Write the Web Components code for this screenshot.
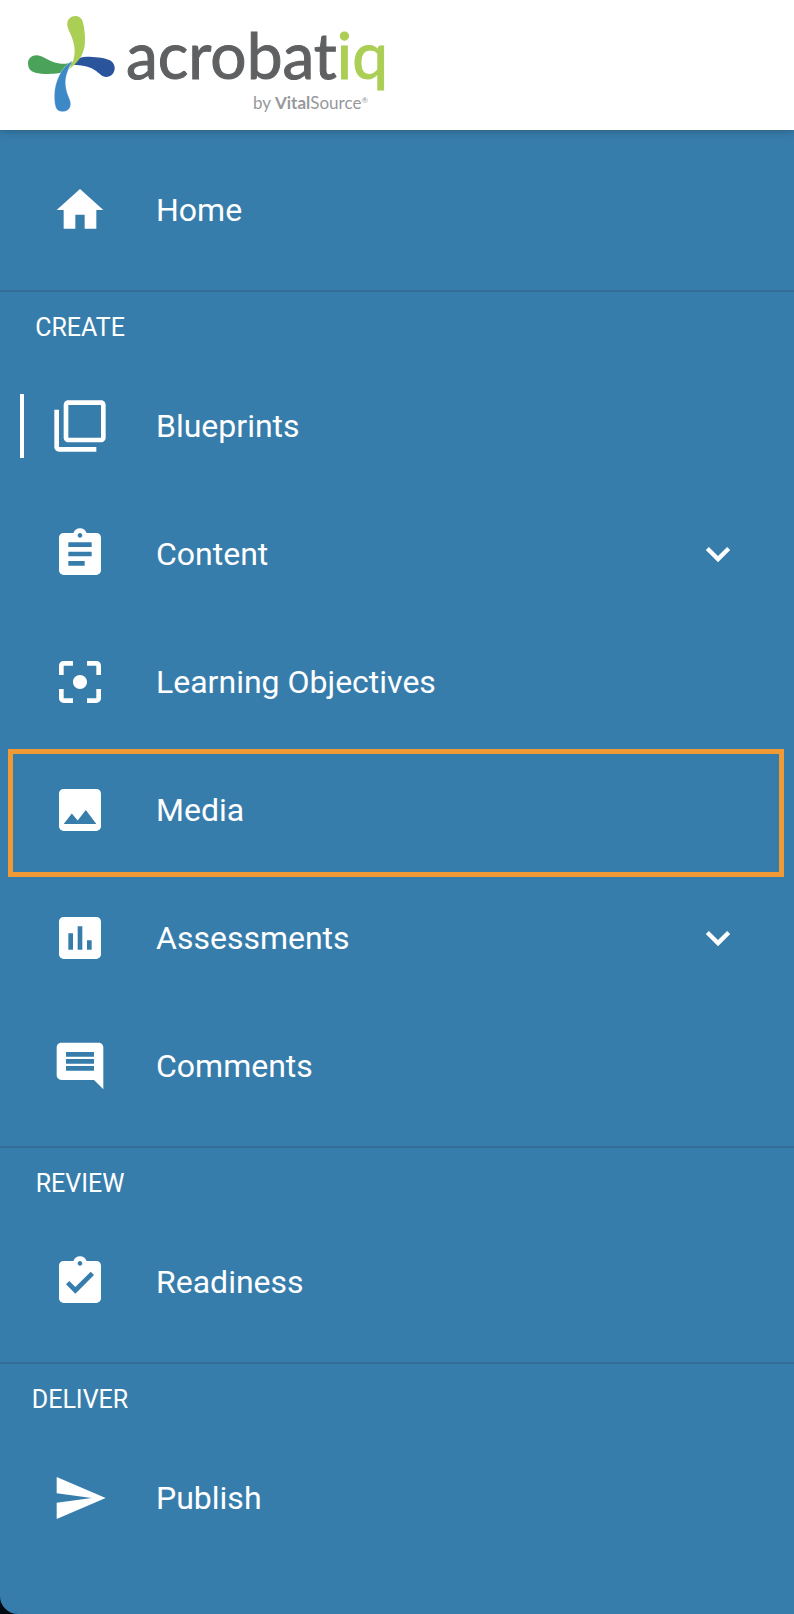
<!DOCTYPE html>
<html lang="en">
<head>
<meta charset="utf-8">
<meta name="viewport" content="width=device-width, initial-scale=1">
<title>Acrobatiq</title>
<style>
  html { background: #020a12; }
  body { margin: 0; font-family: Roboto, "Liberation Sans", sans-serif; }
</style>
</head>
<body>
<app-sidebar>
  <brand-logo slot="brand"></brand-logo>
  <nav-section>
    <nav-item icon="home">Home</nav-item>
  </nav-section>
  <nav-section heading="CREATE">
    <nav-item icon="blueprints" current>Blueprints</nav-item>
    <nav-item icon="content" expandable>Content</nav-item>
    <nav-item icon="objectives">Learning Objectives</nav-item>
    <nav-item icon="media" highlighted>Media</nav-item>
    <nav-item icon="assessments" expandable>Assessments</nav-item>
    <nav-item icon="comments">Comments</nav-item>
  </nav-section>
  <nav-section heading="REVIEW">
    <nav-item icon="readiness">Readiness</nav-item>
  </nav-section>
  <nav-section heading="DELIVER">
    <nav-item icon="publish">Publish</nav-item>
  </nav-section>
</app-sidebar>

<script>
const ICONS = {
  home: 'M10 20v-6h4v6h5v-8h3L12 3 2 12h3v8z',
  blueprints: 'M3 5H1v16c0 1.1.9 2 2 2h16v-2H3V5zm18-4H7c-1.1 0-2 .9-2 2v14c0 1.1.9 2 2 2h14c1.1 0 2-.9 2-2V3c0-1.1-.9-2-2-2zm0 16H7V3h14v14z',
  content: 'M19 3h-4.18C14.4 1.84 13.3 1 12 1c-1.3 0-2.4.84-2.82 2H5c-1.1 0-2 .9-2 2v14c0 1.1.9 2 2 2h14c1.1 0 2-.9 2-2V5c0-1.1-.9-2-2-2zm-7 0c.55 0 1 .45 1 1s-.45 1-1 1-1-.45-1-1 .45-1 1-1zm2 14H7v-2h7v2zm3-4H7v-2h10v2zm0-4H7V7h10v2z',
  objectives: 'M5 15H3v4c0 1.1.9 2 2 2h4v-2H5v-4zM5 5h4V3H5c-1.1 0-2 .9-2 2v4h2V5zm14-2h-4v2h4v4h2V5c0-1.1-.9-2-2-2zm0 16h-4v2h4c1.1 0 2-.9 2-2v-4h-2v4zM12 9c-1.66 0-3 1.34-3 3s1.34 3 3 3 3-1.34 3-3-1.34-3-3-3z',
  media: 'M21 19V5c0-1.1-.9-2-2-2H5c-1.1 0-2 .9-2 2v14c0 1.1.9 2 2 2h14c1.1 0 2-.9 2-2zM8.5 13.5l2.5 3.01L14.5 12l4.5 6H5l3.5-4.5z',
  assessments: 'M19 3H5c-1.1 0-2 .9-2 2v14c0 1.1.9 2 2 2h14c1.1 0 2-.9 2-2V5c0-1.1-.9-2-2-2zM9 17H7v-7h2v7zm4 0h-2V7h2v10zm4 0h-2v-4h2v4z',
  comments: 'M21.99 4c0-1.1-.89-2-1.99-2H4c-1.1 0-2 .9-2 2v12c0 1.1.9 2 2 2h14l4 4-.01-18zM18 14H6v-2h12v2zm0-3H6V9h12v2zm0-3H6V6h12v2z',
  readiness: 'M19 3h-4.18C14.4 1.84 13.3 1 12 1c-1.3 0-2.4.84-2.82 2H5c-1.1 0-2 .9-2 2v14c0 1.1.9 2 2 2h14c1.1 0 2-.9 2-2V5c0-1.1-.9-2-2-2zm-7 0c.55 0 1 .45 1 1s-.45 1-1 1-1-.45-1-1 .45-1 1-1zm-2 14l-4-4 1.41-1.41L10 14.17l6.59-6.59L18 9l-8 8z',
  publish: 'M2.01 21L23 12 2.01 3 2 10l15 2-15 2z'
};

class AppSidebar extends HTMLElement {
  constructor() {
    super();
    this.attachShadow({ mode: 'open' }).innerHTML = `
      <style>
        :host { display: flex; flex-direction: column; box-sizing: border-box; min-height: 100vh;
                background: #377dab; color: #fff; border-radius: 0 0 0 18px; overflow: hidden; }
        header { position: relative; display: flex; align-items: flex-start; box-sizing: border-box;
                 min-height: 130px; padding: 16px 28px 8px; background: #fff;
                 box-shadow: 0 1px 8px rgba(0, 0, 0, .25); }
        nav { display: flex; flex-direction: column; }
      </style>
      <header><slot name="brand"></slot></header>
      <nav aria-label="Main"><slot></slot></nav>`;
  }
}

class BrandLogo extends HTMLElement {
  constructor() {
    super();
    this.attachShadow({ mode: 'open' }).innerHTML = `
      <style>
        :host { display: block; }
        a { display: flex; gap: 11px; color: #5f6062; text-decoration: none; }
        svg { display: block; width: 87px; height: 96px; }
        .words { display: flex; flex-direction: column; align-items: flex-end; padding-top: 1px; }
        .name { font: 400 64px/76px Lato, sans-serif; font-variant-ligatures: none;
                -webkit-text-stroke: 1px currentColor; }
        .name span { color: #abce55; }
        .by { font: 400 17px/20px Lato, sans-serif; color: #97989b; padding-right: 20px; }
        .by b { font-weight: 700; }
        .by sup { font-size: 8px; line-height: 8px; vertical-align: 6px; }
      </style>
      <a href="#home" aria-label="acrobatiq by VitalSource">
        <svg viewBox="84 48 261 288" aria-hidden="true">
          <path fill="#2a549b" d="M213 194C224 175 245 170 268 170C295 171 315 174 328 180C340 186 345 196 344 208C342 222 331 232 317 231C303 230 296 216 275 205C255 196 235 194 213 194Z"/>
          <path fill="#4ba35b" d="M218 186C200 193 180 193 160 186C140 179 128 168 112 166C96 165 84 175 84 190C84 205 92 215 106 218C125 223 160 222 175 220C197 216 208 205 218 186Z"/>
          <path fill="#3d88c7" stroke="#fff" stroke-width="1" d="M217 182C195 196 180 215 170 245C161 270 162 300 166 318C169 330 176 335 188 335C204 335 213 324 212 310C211 295 200 285 197 255C195 230 203 212 217 182Z"/>
          <path fill="#abce55" d="M226 48C211 48 200 60 202 76C204 92 216 105 222 134C227 160 223 182 206 209C236 186 250 163 254 137C257 110 253 84 249 68C246 55 238 48 226 48Z"/>
        </svg>
        <div class="words">
          <div class="name">acrobat<span>iq</span></div>
          <div class="by">by <b>Vital</b>Source<sup>®</sup></div>
        </div>
      </a>`;
  }
}

class NavSection extends HTMLElement {
  connectedCallback() {
    if (this.shadowRoot) return;
    const heading = this.getAttribute('heading');
    this.attachShadow({ mode: 'open' }).innerHTML = `
      <style>
        :host { display: block; padding-bottom: 16px; }
        :host(:first-of-type) { padding-top: 16px; }
        :host([heading]) { border-top: 2px solid #316f98; }
        h2 { margin: 0; width: 160px; height: 70px; text-align: center; font-size: 25px; line-height: 72px; font-weight: 400; }
      </style>
      ${heading ? `<h2>${heading}</h2>` : ''}
      <slot></slot>`;
  }
}

class NavItem extends HTMLElement {
  connectedCallback() {
    if (this.shadowRoot) return;
    const icon = this.getAttribute('icon');
    const expandable = this.hasAttribute('expandable');
    const current = this.hasAttribute('current') ? 'aria-current="page"' : '';
    const content = `
      <svg class="icon" viewBox="0 0 24 24" aria-hidden="true"><path d="${ICONS[icon]}"/></svg>
      <span><slot></slot></span>
      ${expandable ? '<svg class="chevron" viewBox="0 0 24 24" aria-hidden="true"><path d="M7.41 8.59L12 13.17l4.59-4.58L18 10l-6 6-6-6z"/></svg>' : ''}`;
    this.attachShadow({ mode: 'open' }).innerHTML = `
      <style>
        :host { display: block; position: relative; }
        a, button { display: flex; align-items: center; gap: 48px; box-sizing: border-box; width: 100%;
                    min-height: 128px; padding: 0 52px; border: 0; margin: 0; background: none;
                    color: inherit; font: inherit; font-size: 32px; line-height: 40px;
                    text-align: left; text-decoration: none; cursor: pointer; }
        span { flex: 1; }
        svg { flex: none; fill: currentColor; }
        .icon { width: 56px; height: 56px; }
        .chevron { width: 48px; height: 48px; stroke: currentColor; stroke-width: .2; stroke-linejoin: round; }
        :host([current])::before { content: ""; position: absolute; left: 20px; top: 32px; bottom: 32px;
                                   width: 4px; background: #fff; }
        :host([highlighted])::after { content: ""; position: absolute; inset: 3px 10px -3px 8px;
                                      border: 5px solid #f09a36; pointer-events: none; }
      </style>
      ${expandable
        ? `<button type="button" aria-expanded="false">${content}</button>`
        : `<a href="#${icon}" ${current}>${content}</a>`}`;
  }
}

customElements.define('app-sidebar', AppSidebar);
customElements.define('brand-logo', BrandLogo);
customElements.define('nav-section', NavSection);
customElements.define('nav-item', NavItem);
</script>
</body>
</html>
